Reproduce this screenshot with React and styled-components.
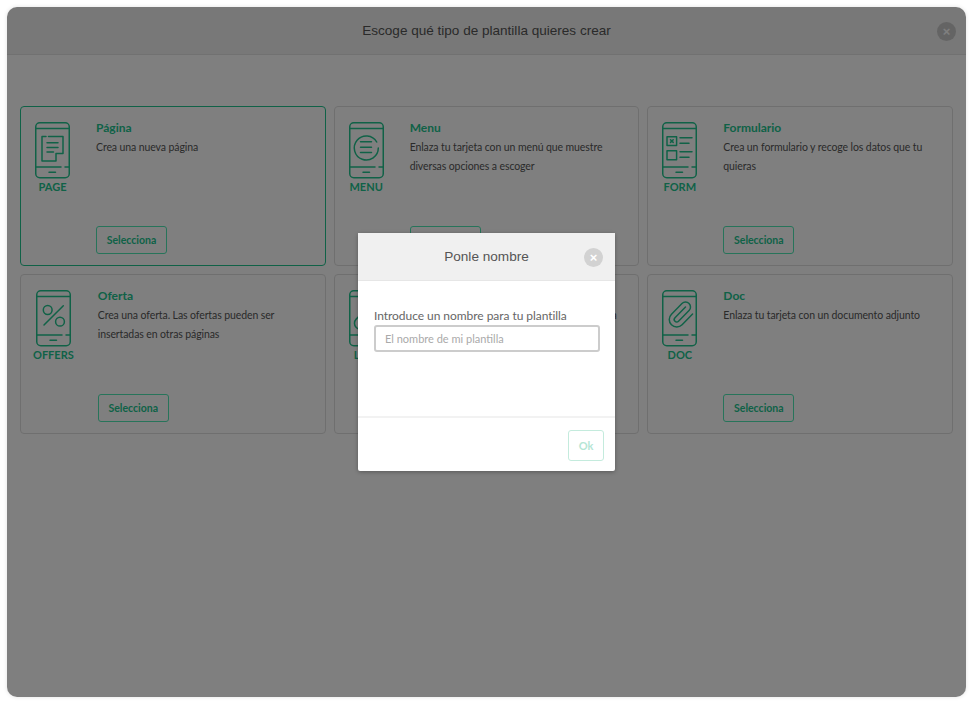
import styled, { createGlobalStyle } from 'styled-components';

const GREEN = '#21c48e';

const GlobalStyle = createGlobalStyle`
  html, body {
    margin: 0;
    height: 100%;
    background: #fff;
    font-family: "Lato", "Liberation Sans", sans-serif;
  }
  #root { padding: 7px 10px 10px 7px; }
`;

function PhoneIcon({ children }) {
  return (
    <PhoneSvg viewBox="0 0 35 57" fill="none" stroke="currentColor" strokeWidth="1.5" strokeLinecap="round" strokeLinejoin="round">
      <rect x="0.75" y="0.75" width="33.5" height="55" rx="4" />
      <path d="M0.75 6.6H34.25" />
      <path d="M0.75 45H26M30 45H34.25" />
      <path d="M14 50.2H20.5" />
      {children}
    </PhoneSvg>
  );
}

const PageGlyph = () => (
  <>
    <path d="M11 14.5H7V39H21V31.5H28V14.5H13.5" />
    <path d="M12 20.8H23M12 25.4H23M12 30H18.5" />
  </>
);

const MenuGlyph = () => (
  <>
    <path d="M29.3 26A12 12 0 1 1 27.7 20" />
    <path d="M11.5 19.8H22.5M11.5 25.3H22.5M11.5 30.4H22.5" />
  </>
);

const FormGlyph = () => (
  <>
    <rect x="5" y="14.8" width="9.6" height="8.6" />
    <path d="M8.5 17.8L11.2 20.4M11.2 17.8L8.5 20.4" />
    <rect x="5" y="28.8" width="9.6" height="9" />
    <path d="M18 15.8H30M18 21.3H27M18 29.8H30M18 35.3H27" />
  </>
);

const OffersGlyph = () => (
  <>
    <circle cx="11.7" cy="20" r="4.4" />
    <circle cx="24" cy="31.7" r="4.4" />
    <path d="M8 35L27.3 15.7" />
  </>
);

const LinkGlyph = () => (
  <g transform="translate(3 13) scale(1.2)" strokeWidth="1.25">
    <path d="M10 13a5 5 0 0 0 7.54.54l3-3a5 5 0 0 0-7.07-7.07l-1.72 1.71" />
    <path d="M14 11a5 5 0 0 0-7.54-.54l-3 3a5 5 0 0 0 7.07 7.07l1.71-1.71" />
  </g>
);

const DocGlyph = () => (
  <g transform="translate(3.5 9.5) scale(1.25)" strokeWidth="1.2">
    <path d="m16 6-8.414 8.586a2 2 0 0 0 2.829 2.829l8.414-8.586a4 4 0 1 0-5.657-5.657l-8.379 8.551a6 6 0 1 0 8.485 8.485l8.379-8.551" />
  </g>
);

const templates = [
  { label: 'PAGE', title: 'Página', text: 'Crea una nueva página', glyph: <PageGlyph />, active: true },
  { label: 'MENU', title: 'Menu', text: 'Enlaza tu tarjeta con un menú que muestre diversas opciones a escoger', glyph: <MenuGlyph /> },
  { label: 'FORM', title: 'Formulario', text: 'Crea un formulario y recoge los datos que tu quieras', glyph: <FormGlyph /> },
  { label: 'OFFERS', title: 'Oferta', text: 'Crea una oferta. Las ofertas pueden ser insertadas en otras páginas', glyph: <OffersGlyph /> },
  { label: 'LINK', title: 'Link', text: 'Enlaza tu tarjeta con una dirección web propia', glyph: <LinkGlyph /> },
  { label: 'DOC', title: 'Doc', text: 'Enlaza tu tarjeta con un documento adjunto', glyph: <DocGlyph /> },
];

export default function App() {
  return (
    <>
      <GlobalStyle />
      <Window>
        <Header>
          <HeaderTitle>Escoge qué tipo de plantilla quieres crear</HeaderTitle>
          <CloseButton $tone="#c9c9c9" $right={10} aria-label="Cerrar">×</CloseButton>
        </Header>
        <Grid>
          {templates.map((t) => (
            <Card key={t.label} $active={t.active}>
              <IconColumn>
                <PhoneIcon>{t.glyph}</PhoneIcon>
                <IconLabel>{t.label}</IconLabel>
              </IconColumn>
              <CardBody>
                <CardTitle>{t.title}</CardTitle>
                <CardText>{t.text}</CardText>
                <SelectButton>Selecciona</SelectButton>
              </CardBody>
            </Card>
          ))}
        </Grid>
        <Overlay>
          <Modal>
            <ModalHeader>
              <ModalTitle>Ponle nombre</ModalTitle>
              <CloseButton $tone="#d2d2d2" $right={12} aria-label="Cerrar">×</CloseButton>
            </ModalHeader>
            <ModalBody>
              <FieldLabel htmlFor="nombre">Introduce un nombre para tu plantilla</FieldLabel>
              <NameInput id="nombre" placeholder="El nombre de mi plantilla" />
            </ModalBody>
            <ModalFooter>
              <OkButton>Ok</OkButton>
            </ModalFooter>
          </Modal>
        </Overlay>
      </Window>
    </>
  );
}

const Window = styled.div`
  position: relative;
  width: 959px;
  height: 690px;
  background: #fff;
  border-radius: 10px;
  overflow: hidden;
  box-shadow: 0 0 4px rgba(0, 0, 0, 0.12);
`;

const Header = styled.header`
  position: relative;
  height: 48px;
  box-sizing: border-box;
  display: flex;
  align-items: center;
  justify-content: center;
  background: #f0f0f0;
  border-bottom: 1px solid #e2e2e2;
`;

const HeaderTitle = styled.h1`
  margin: 0;
  font: 400 13.55px "Liberation Sans", Arial, sans-serif;
  color: #555;
`;

const CloseButton = styled.button`
  position: absolute;
  top: 14.5px;
  right: ${(p) => p.$right}px;
  width: 19px;
  height: 19px;
  padding: 0;
  border: 0;
  border-radius: 50%;
  background: ${(p) => p.$tone};
  color: #fff;
  font: 700 13px/19px "Liberation Sans", Arial, sans-serif;
  text-align: center;
`;

const Grid = styled.main`
  display: grid;
  grid-template-columns: repeat(3, 1fr);
  grid-auto-rows: 160px;
  gap: 8px;
  padding: 51px 13px 0;
`;

const Card = styled.article`
  display: flex;
  gap: 24px;
  box-sizing: border-box;
  padding: 15px 12px 11px 12px;
  background: #fff;
  border: 1px solid ${(p) => (p.$active ? GREEN : '#dedede')};
  border-radius: 4px;
`;

const IconColumn = styled.div`
  display: flex;
  flex-direction: column;
  align-items: center;
  min-width: 39px;
`;

const PhoneSvg = styled.svg`
  display: block;
  width: 35px;
  height: 57px;
  color: ${GREEN};
`;

const IconLabel = styled.span`
  font-size: 11px;
  line-height: 16px;
  font-weight: 700;
  color: ${GREEN};
`;

const CardBody = styled.div`
  flex: 1;
  display: flex;
  flex-direction: column;
  align-items: flex-start;
`;

const CardTitle = styled.h3`
  margin: 0;
  font-size: 12px;
  line-height: 11px;
  font-weight: 700;
  color: ${GREEN};
`;

const CardText = styled.p`
  margin: 5px 0 0;
  font-size: 10.5px;
  letter-spacing: -0.1px;
  line-height: 19px;
  color: #555;
`;

const SelectButton = styled.button`
  margin-top: auto;
  width: 71px;
  height: 28px;
  padding: 0;
  background: #fff;
  border: 1px solid #4fe8b4;
  border-radius: 3px;
  font: 700 10.5px "Lato", sans-serif;
  color: ${GREEN};
`;

const Overlay = styled.div`
  position: absolute;
  inset: 0;
  display: flex;
  align-items: center;
  justify-content: center;
  background: rgba(0, 0, 0, 0.5);
`;

const Modal = styled.div`
  width: 257px;
  height: 238px;
  display: flex;
  flex-direction: column;
  background: #fff;
  border-radius: 2px;
  box-shadow: 0 1px 4px rgba(0, 0, 0, 0.3);
`;

const ModalHeader = styled.div`
  position: relative;
  height: 48px;
  flex: none;
  box-sizing: border-box;
  display: flex;
  align-items: center;
  justify-content: center;
  background: #f0f0f0;
  border-bottom: 1px solid #e6e6e6;
`;

const ModalTitle = styled.h2`
  margin: 0;
  font: 400 13.6px "Liberation Sans", Arial, sans-serif;
  color: #555;
`;

const ModalBody = styled.div`
  flex: 1;
  display: flex;
  flex-direction: column;
  padding: 27px 16px 0;
`;

const FieldLabel = styled.label`
  margin-bottom: 1.5px;
  font-size: 12px;
  letter-spacing: -0.05px;
  line-height: 15px;
  color: #666;
`;

const NameInput = styled.input`
  box-sizing: border-box;
  width: 226px;
  height: 27px;
  padding: 0 9px;
  background: #fff;
  border: 2px solid #ccc;
  border-radius: 3px;
  outline: none;
  font: 400 11px "Lato", sans-serif;

  &::placeholder {
    color: #aaa;
    opacity: 1;
  }
`;

const ModalFooter = styled.div`
  flex: none;
  height: 55px;
  box-sizing: border-box;
  display: flex;
  align-items: flex-start;
  justify-content: flex-end;
  padding: 12px 11px 0;
  border-top: 2px solid #f2f2f2;
`;

const OkButton = styled.button`
  width: 36px;
  height: 31px;
  padding: 0;
  background: #fff;
  border: 1px solid #c4ebdd;
  border-radius: 3px;
  font: 700 11px "Lato", sans-serif;
  color: #b5e6d5;
`;
